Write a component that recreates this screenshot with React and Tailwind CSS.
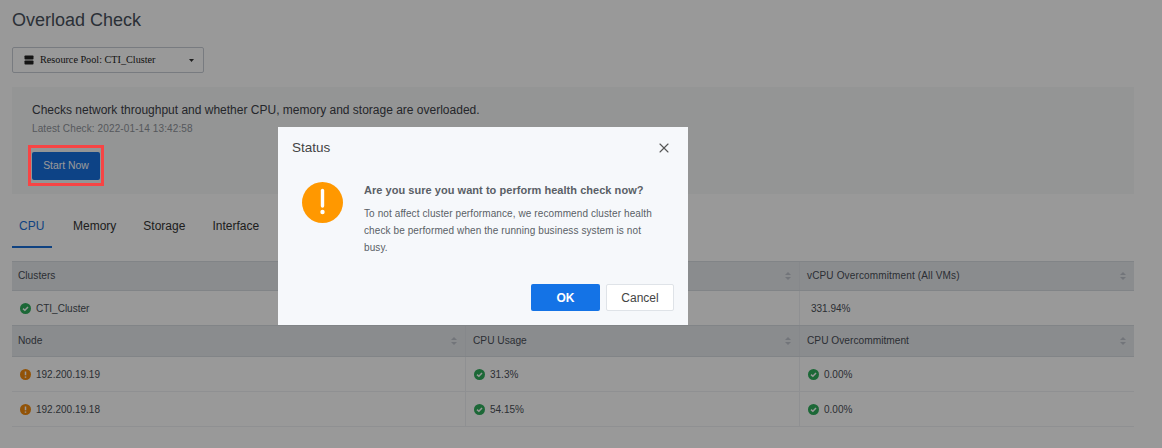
import { X } from "lucide-react";

const SortIcon = () => (
  <svg width="8" height="10" viewBox="0 0 8 10" className="shrink-0">
    <path d="M4 1 L7 4 H1 Z" fill="#bfc4cc" />
    <path d="M4 9 L7 6 H1 Z" fill="#bfc4cc" />
  </svg>
);

const OkIcon = () => (
  <svg width="11" height="11" viewBox="0 0 11 11" className="shrink-0">
    <circle cx="5.5" cy="5.5" r="5.5" fill="#2fae5c" />
    <path d="M3 5.6 L4.9 7.3 L8 4" fill="none" stroke="#fff" strokeWidth="1.5" />
  </svg>
);

const WarnIcon = () => (
  <svg width="11" height="11" viewBox="0 0 11 11" className="shrink-0">
    <circle cx="5.5" cy="5.5" r="5.5" fill="#f38a0c" />
    <path d="M5.5 2.4 V6.2 M5.5 7.4 V8.7" fill="none" stroke="#fff" strokeWidth="1.5" />
  </svg>
);

const HeadCell = ({ children, border }) => (
  <div className={`flex items-center justify-between pr-[7px] ${border ? "border-l border-[#dfe3e8] pl-[7px]" : "pl-[6px]"}`}>
    <span>{children}</span>
    <SortIcon />
  </div>
);

const BodyCell = ({ icon, children, border }) => (
  <div className={`flex items-center gap-[5px] pl-[8px] ${border ? "border-l border-[#eef0f3]" : ""}`}>
    {icon}
    <span>{children}</span>
  </div>
);

const App = () => {
  return (
    <div className="relative h-[448px] w-[1162px] overflow-hidden bg-white font-['Liberation_Sans',Arial,sans-serif] text-[#333]">
      <div className="w-[1146px] pl-[12px] pr-[12px] pt-[9px]">
        <h1 className="text-[18px] leading-[22px] text-[#48515c]">Overload Check</h1>

        {/* Resource pool select */}
        <div className="mt-[16px] flex h-[26px] w-[192px] items-center rounded-[2px] border border-[#c9ced6] pl-[11px] pr-[9px] font-['Liberation_Serif',serif] text-[10.2px] text-[#222]">
          <svg width="10" height="10" viewBox="0 0 10 10" className="mr-[6px] shrink-0">
            <rect x="0.5" y="0.5" width="9" height="4" rx="0.8" fill="#222" />
            <rect x="0.5" y="5.5" width="9" height="4" rx="0.8" fill="#222" />
          </svg>
          <span className="flex-1">Resource Pool: CTI_Cluster</span>
          <svg width="5" height="3" viewBox="0 0 5 3" className="shrink-0">
            <path d="M0 0 H5 L2.5 3 Z" fill="#333" />
          </svg>
        </div>

        {/* Check panel */}
        <div className="mt-[14px] h-[107px] bg-[#f7f9f9] pl-[20px] pt-[15px]">
          <p className="text-[12px] leading-[16px] text-[#3d4148]">
            Checks network throughput and whether CPU, memory and storage are overloaded.
          </p>
          <p className="mt-[4px] text-[10px] leading-[14px] tracking-[0.12px] text-[#8f9399]">Latest Check: 2022-01-14 13:42:58</p>
          <button className="mt-[16px] flex h-[28px] w-[68px] items-center justify-center rounded-[2px] bg-[#1670e0] text-[10.4px] text-white">
            Start Now
          </button>
        </div>

        {/* Tabs */}
        <div className="mt-[19px] flex h-[35px] items-start text-[12px] leading-[16px] text-[#333]">
          <div className="h-[35px] w-[40px] border-b-2 border-[#1a6fd8] pl-[7px] pt-[5px] text-[#1a6fd8]">CPU</div>
          <div className="ml-[21px] pt-[5px]">Memory</div>
          <div className="ml-[27px] pt-[5px]">Storage</div>
          <div className="ml-[27px] pt-[5px]">Interface</div>
        </div>

        {/* Tables */}
        <div className="mt-[13px] text-[10.2px] text-[#4a4f57]">
          <div className="grid h-[30px] grid-cols-[787px_1fr] border-y border-[#d8dce2] bg-[#e6e9ed]">
            <HeadCell>Clusters</HeadCell>
            <HeadCell border><span className="text-[10px] tracking-[0.15px]">vCPU Overcommitment (All VMs)</span></HeadCell>
          </div>
          <div className="grid h-[34px] grid-cols-[787px_1fr] text-[10px]">
            <BodyCell icon={<OkIcon />}>CTI_Cluster</BodyCell>
            <div className="flex items-center border-l border-[#eef0f3] pl-[11px]">331.94%</div>
          </div>
          <div className="grid h-[32px] grid-cols-[453px_334px_1fr] border-y border-[#d8dce2] bg-[#e6e9ed]">
            <HeadCell>Node</HeadCell>
            <HeadCell border>CPU Usage</HeadCell>
            <HeadCell border>CPU Overcommitment</HeadCell>
          </div>
          <div className="grid h-[35px] grid-cols-[453px_334px_1fr] border-b border-[#eef0f3] text-[10px]">
            <BodyCell icon={<WarnIcon />}>192.200.19.19</BodyCell>
            <BodyCell border icon={<OkIcon />}>31.3%</BodyCell>
            <BodyCell border icon={<OkIcon />}>0.00%</BodyCell>
          </div>
          <div className="grid h-[35px] grid-cols-[453px_334px_1fr] border-b border-[#eef0f3] text-[10px]">
            <BodyCell icon={<WarnIcon />}>192.200.19.18</BodyCell>
            <BodyCell border icon={<OkIcon />}>54.15%</BodyCell>
            <BodyCell border icon={<OkIcon />}>0.00%</BodyCell>
          </div>
        </div>
      </div>

      {/* Dim overlay */}
      <div className="absolute inset-0 bg-black/40" />

      {/* Annotation around the button */}
      <div className="absolute left-[28px] top-[145px] h-[41px] w-[76px] border-[3px] border-[#f74444]" />

      {/* Dialog */}
      <div className="absolute left-[278px] top-[127px] flex h-[198px] w-[410px] flex-col bg-[#f6f8fb] text-[#444]">
        <div className="flex items-center justify-between pl-[14px] pr-[16px] pt-[11px]">
          <span className="text-[13.5px] leading-[20px]">Status</span>
          <X size={16} strokeWidth={1.6} className="text-[#555]" />
        </div>
        <div className="mt-[24px] flex pl-[24px] pr-[29px]">
          <svg width="41" height="41" viewBox="0 0 41 41" className="shrink-0">
            <circle cx="20.5" cy="20.5" r="20.5" fill="#ff9800" />
            <path d="M20.5 8.5 V24" stroke="#fff" strokeWidth="3.4" strokeLinecap="round" />
            <circle cx="20.5" cy="30" r="2.2" fill="#fff" />
          </svg>
          <div className="ml-[21px]">
            <p className="text-[11px] font-bold leading-[16px] tracking-[0.04px] text-[#5a5f66]">Are you sure you want to perform health check now?</p>
            <p className="mt-[7px] text-[10px] leading-[17px] tracking-[0.1px] text-[#5a5f66]">
              To not affect cluster performance, we recommend cluster health check be performed when the running business system is not busy.
            </p>
          </div>
        </div>
        <div className="mt-auto flex justify-end gap-[6px] pb-[14px] pr-[14px]">
          <button className="h-[27px] w-[69px] rounded-[2px] bg-[#1473e6] text-[12px] font-bold text-white">OK</button>
          <button className="h-[27px] w-[68px] rounded-[2px] border border-[#dfe3e8] bg-white text-[12px] text-[#444]">Cancel</button>
        </div>
      </div>
    </div>
  );
};

export default App;
